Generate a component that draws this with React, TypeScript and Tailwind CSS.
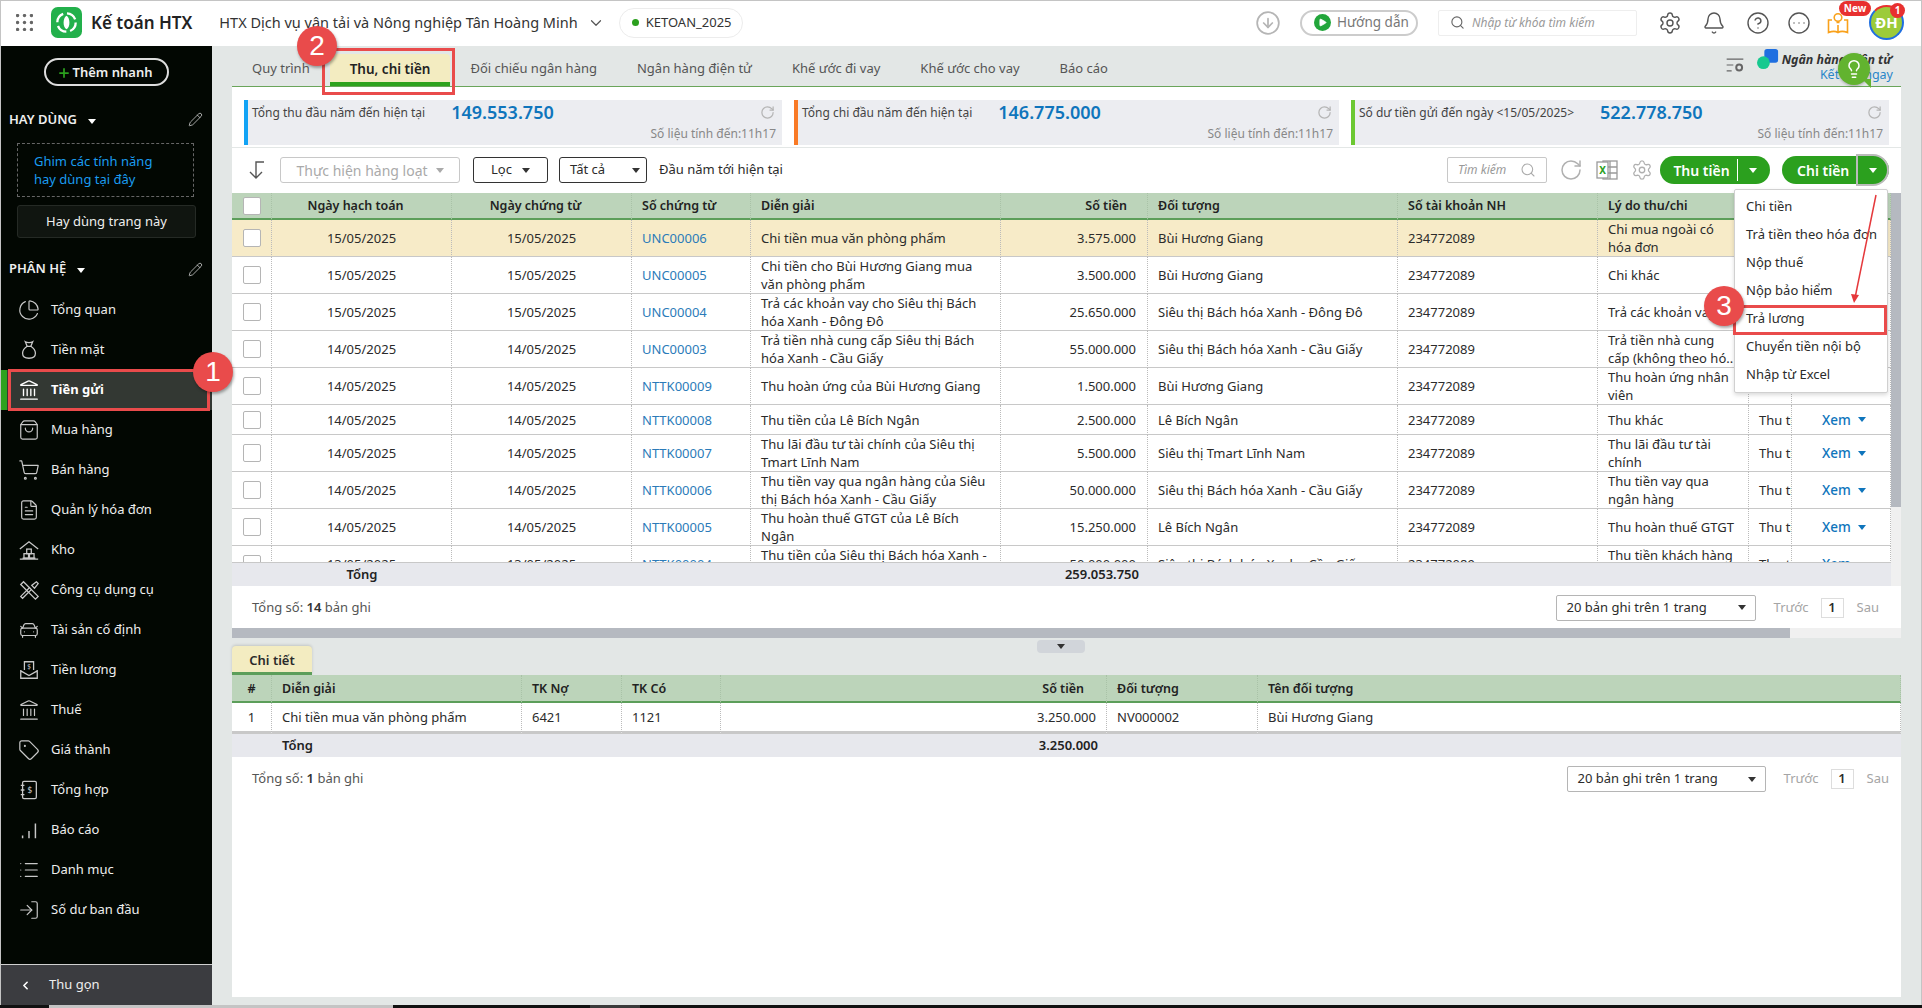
import { Bell, CarFront, ChartPie, ChevronDown, ChevronLeft, CircleArrowDown, CircleEllipsis, CircleHelp, FileText, Landmark, Lightbulb, List, LogIn, Pencil, Play, Plus, RotateCw, Search, Settings, ShoppingBag, ShoppingCart, Tag } from 'lucide-react';
import type { ReactNode } from 'react';

const Caret = ({ className = 'border-t-[#333]' }: { className?: string }) => (
  <span className={`inline-block h-0 w-0 border-x-[4px] border-t-[5px] border-x-transparent ${className}`} />
);

function MoneyBag() {
  return (
    <svg viewBox="0 0 24 24" className="h-[22px] w-[22px]" fill="none" stroke="#c8c8c8" strokeWidth="1.4">
      <path d="M8 3c2 1.2 6 1.2 8 0l-2 5h-4z" />
      <path d="M10 8c-3 2-5 4.500-5 7.500 0 3.500 3 5.500 7 5.500s7-2 7-5.500c0-3-2-5.500-5-7.500" />
    </svg>
  );
}

function Warehouse() {
  return (
    <svg viewBox="0 0 24 24" className="h-[22px] w-[22px]" fill="none" stroke="#c8c8c8" strokeWidth="1.4">
      <path d="M2 11l10-8 10 8M5 21h14M2 22h20" />
      <rect x="9.500" y="11" width="5" height="5" />
      <rect x="6.500" y="16" width="5" height="5" />
      <rect x="12.500" y="16" width="5" height="5" />
    </svg>
  );
}

function Tools() {
  return (
    <svg viewBox="0 0 24 24" className="h-[22px] w-[22px]" fill="none" stroke="#c8c8c8" strokeWidth="1.4">
      <path d="M3 6l3-3 16 16-3 3z" />
      <path d="M20 3l2 2-4 5-3-3zM13 9L3 19l2 2 10-10" />
    </svg>
  );
}

function Salary() {
  return (
    <svg viewBox="0 0 24 24" className="h-[22px] w-[22px]" fill="none" stroke="#c8c8c8" strokeWidth="1.4">
      <path d="M7 12V3h10v9M3 12v9h18v-9M3 13l9 5 9-5" />
      <text x="12" y="11" fontSize="7" textAnchor="middle" fill="#c8c8c8" stroke="none">$</text>
    </svg>
  );
}

function Ledger() {
  return (
    <svg viewBox="0 0 24 24" className="h-[22px] w-[22px]" fill="none" stroke="#c8c8c8" strokeWidth="1.4">
      <rect x="5" y="2.500" width="15" height="19" rx="1.500" />
      <path d="M3 7h4M3 12h4M3 17h4" />
      <text x="13" y="15" fontSize="9" textAnchor="middle" fill="#c8c8c8" stroke="none">$</text>
    </svg>
  );
}

function Bars() {
  return (
    <svg viewBox="0 0 24 24" className="h-[22px] w-[22px]" fill="none" stroke="#c8c8c8" strokeWidth="1.6">
      <path d="M5 21v-3M12 21v-8M19 21V5" />
    </svg>
  );
}

const iconCls = 'h-[22px] w-[22px] text-[#c8c8c8]';

const menu: { label: string; icon: ReactNode; active?: boolean }[] = [
  { label: 'Tổng quan', icon: <ChartPie className={iconCls} strokeWidth={1.3} /> },
  { label: 'Tiền mặt', icon: <MoneyBag /> },
  { label: 'Tiền gửi', icon: <Landmark className="h-[22px] w-[22px] text-white" strokeWidth={1.5} />, active: true },
  { label: 'Mua hàng', icon: <ShoppingBag className={iconCls} strokeWidth={1.3} /> },
  { label: 'Bán hàng', icon: <ShoppingCart className={iconCls} strokeWidth={1.3} /> },
  { label: 'Quản lý hóa đơn', icon: <FileText className={iconCls} strokeWidth={1.3} /> },
  { label: 'Kho', icon: <Warehouse /> },
  { label: 'Công cụ dụng cụ', icon: <Tools /> },
  { label: 'Tài sản cố định', icon: <CarFront className={iconCls} strokeWidth={1.3} /> },
  { label: 'Tiền lương', icon: <Salary /> },
  { label: 'Thuế', icon: <Landmark className={iconCls} strokeWidth={1.3} /> },
  { label: 'Giá thành', icon: <Tag className={iconCls} strokeWidth={1.3} /> },
  { label: 'Tổng hợp', icon: <Ledger /> },
  { label: 'Báo cáo', icon: <Bars /> },
  { label: 'Danh mục', icon: <List className={iconCls} strokeWidth={1.3} /> },
  { label: 'Số dư ban đầu', icon: <LogIn className={iconCls} strokeWidth={1.3} /> },
];

const tabs = ['Quy trình', 'Thu, chi tiền', 'Đối chiếu ngân hàng', 'Ngân hàng điện tử', 'Khế ước đi vay', 'Khế ước cho vay', 'Báo cáo'];

const rows = [
  { h: 'h-[37px]', d1: '15/05/2025', no: 'UNC00006', desc: 'Chi tiền mua văn phòng phẩm', amt: '3.575.000', obj: 'Bùi Hương Giang', why: 'Chi mua ngoài có hóa đơn', sel: true },
  { h: 'h-[37px]', d1: '15/05/2025', no: 'UNC00005', desc: 'Chi tiền cho Bùi Hương Giang mua văn phòng phẩm', amt: '3.500.000', obj: 'Bùi Hương Giang', why: 'Chi khác' },
  { h: 'h-[37px]', d1: '15/05/2025', no: 'UNC00004', desc: 'Trả các khoản vay cho Siêu thị Bách hóa Xanh - Đông Đô', amt: '25.650.000', obj: 'Siêu thị Bách hóa Xanh - Đông Đô', why: 'Trả các khoản vay' },
  { h: 'h-[37px]', d1: '14/05/2025', no: 'UNC00003', desc: 'Trả tiền nhà cung cấp Siêu thị Bách hóa Xanh - Cầu Giấy', amt: '55.000.000', obj: 'Siêu thị Bách hóa Xanh - Cầu Giấy', why: 'Trả tiền nhà cung cấp (không theo hó..' },
  { h: 'h-[37px]', d1: '14/05/2025', no: 'NTTK00009', desc: 'Thu hoàn ứng của Bùi Hương Giang', amt: '1.500.000', obj: 'Bùi Hương Giang', why: 'Thu hoàn ứng nhân viên' },
  { h: 'h-[30px]', d1: '14/05/2025', no: 'NTTK00008', desc: 'Thu tiền của Lê Bích Ngân', amt: '2.500.000', obj: 'Lê Bích Ngân', why: 'Thu khác' },
  { h: 'h-[37px]', d1: '14/05/2025', no: 'NTTK00007', desc: 'Thu lãi đầu tư tài chính của Siêu thị Tmart Lĩnh Nam', amt: '5.500.000', obj: 'Siêu thị Tmart Lĩnh Nam', why: 'Thu lãi đầu tư tài chính' },
  { h: 'h-[37px]', d1: '14/05/2025', no: 'NTTK00006', desc: 'Thu tiền vay qua ngân hàng của Siêu thị Bách hóa Xanh - Cầu Giấy', amt: '50.000.000', obj: 'Siêu thị Bách hóa Xanh - Cầu Giấy', why: 'Thu tiền vay qua ngân hàng' },
  { h: 'h-[37px]', d1: '14/05/2025', no: 'NTTK00005', desc: 'Thu hoàn thuế GTGT của Lê Bích Ngân', amt: '15.250.000', obj: 'Lê Bích Ngân', why: 'Thu hoàn thuế GTGT' },
  { h: 'h-[37px]', d1: '13/05/2025', no: 'NTTK00004', desc: 'Thu tiền của Siêu thị Bách hóa Xanh - Cầu Giấy', amt: '50.000.000', obj: 'Siêu thị Bách hóa Xanh - Cầu Giấy', why: 'Thu tiền khách hàng chưa' },
];

const cards = [
  { w: 'w-[538px]', bar: 'border-[#12a3f5]', label: 'Tổng thu đầu năm đến hiện tại', value: '149.553.750' },
  { w: 'w-[545px]', bar: 'border-[#f97a26]', label: 'Tổng chi đầu năm đến hiện tại', value: '146.775.000' },
  { w: 'w-[538px]', bar: 'border-[#6cc832]', label: 'Số dư tiền gửi đến ngày <15/05/2025>', value: '522.778.750' },
];

const payMenu = ['Chi tiền', 'Trả tiền theo hóa đơn', 'Nộp thuế', 'Nộp bảo hiểm', 'Trả lương', 'Chuyển tiền nội bộ', 'Nhập từ Excel'];

const th = 'border-r border-b-2 border-r-[#a9c2a7] border-b-[#5c9e5a] [border-right-style:dotted] px-[10px] pt-[1px] font-semibold text-[12.5px]';
const td = 'border-r border-b border-r-[#bbbbbb] border-b-[#c8c8c8] [border-right-style:dotted] px-[10px] leading-[18px] overflow-hidden';

function Checkbox() {
  return <span className="mx-auto block h-[18px] w-[18px] rounded-[2px] border border-[#b5b5b5] bg-white" />;
}

function Badge({ n, className }: { n: string; className: string }) {
  return (
    <div className={`absolute flex h-[40px] w-[40px] items-center justify-center rounded-full bg-[#e94b4b] font-['Liberation_Sans',sans-serif] text-[28px] text-white shadow-[1px_2px_3px_rgba(0,0,0,0.35)] ${className}`}>
      {n}
    </div>
  );
}

function Pager({ select }: { select: string }) {
  return (
    <div className="ml-auto flex items-center">
      <div className={`flex h-[26px] items-center justify-between rounded-[2px] border border-[#b5b5b5] pr-[9px] pl-[10px] text-[13px] ${select}`}>
        20 bản ghi trên 1 trang <Caret />
      </div>
      <span className="ml-[18px] text-[13px] text-[#a5a5a5]">Trước</span>
      <span className="ml-[12px] flex h-[20px] w-[23px] items-center justify-center border border-[#dddddd] text-[13px] font-semibold">1</span>
      <span className="ml-[13px] text-[13px] text-[#a5a5a5]">Sau</span>
    </div>
  );
}

export default function App() {
  return (
    <div className="relative flex h-[1008px] w-[1922px] flex-col overflow-hidden bg-[#e3e7e6] font-['Noto_Sans',sans-serif] text-[13px] text-[#2b2b2b]">
      <header className="flex h-[46px] shrink-0 items-center border-t border-r border-l border-[#c4c4c4] bg-white pb-[2px]">
        <svg viewBox="0 0 16 16" className="ml-[15px] h-[17px] w-[17px]" fill="#666">
          {[1.5, 8, 14.5].flatMap((x) => [1.5, 8, 14.5].map((y) => <circle key={`${x}-${y}`} cx={x} cy={y} r="1.6" />))}
        </svg>
        <svg viewBox="0 0 32 32" className="ml-[18px] h-[31px] w-[31px]">
          <rect width="32" height="32" rx="7" fill="#22b04b" />
          <circle cx="16" cy="16" r="9.500" fill="none" stroke="#fff" strokeWidth="2.400" strokeDasharray="11 4" />
          <path d="M16 9c4 2 4 12 0 14-4-2-4-12 0-14z" fill="#fff" />
        </svg>
        <span className="ml-[9px] text-[17px] font-semibold text-[#222]">Kế toán HTX</span>
        <span className="ml-[27px] text-[14.500px] text-[#333]">HTX Dịch vụ vận tải và Nông nghiệp Tân Hoàng Minh</span>
        <ChevronDown className="ml-[9px] h-[18px] w-[18px] text-[#555]" strokeWidth={1.6} />
        <div className="ml-[14px] flex h-[30px] w-[124px] items-center rounded-full border border-[#ececec] pl-[12px]">
          <span className="h-[7px] w-[7px] rounded-full bg-[#2ba01e]" />
          <span className="ml-[7px] text-[13px] text-[#333]">KETOAN_2025</span>
        </div>
        <CircleArrowDown className="ml-auto h-[26px] w-[26px] text-[#b5b5b5]" strokeWidth={1.6} />
        <div className="ml-[19px] flex h-[26px] w-[118px] items-center rounded-full border-2 border-[#cccccc] pl-[12px]">
          <span className="flex h-[17px] w-[17px] items-center justify-center rounded-full bg-[#22a63b]">
            <Play className="h-[9px] w-[9px] fill-white text-white" />
          </span>
          <span className="ml-[6px] text-[13.500px] text-[#777]">Hướng dẫn</span>
        </div>
        <div className="ml-[20px] flex h-[26px] w-[199px] items-center rounded-[2px] border border-[#eeeeee] pl-[11px]">
          <Search className="h-[15px] w-[15px] text-[#666]" strokeWidth={1.8} />
          <span className="ml-[7px] text-[12px] text-[#999] italic">Nhập từ khóa tìm kiếm</span>
        </div>
        <Settings className="ml-[21px] h-[24px] w-[24px] text-[#555]" strokeWidth={1.4} />
        <Bell className="ml-[20px] h-[24px] w-[24px] text-[#555]" strokeWidth={1.4} />
        <CircleHelp className="ml-[20px] h-[24px] w-[24px] text-[#555]" strokeWidth={1.4} />
        <CircleEllipsis className="ml-[17px] h-[24px] w-[24px] text-[#555]" strokeWidth={1.4} />
        <div className="relative ml-[15px] h-[24px] w-[24px]">
          <svg viewBox="0 0 24 24" className="h-[24px] w-[24px]" fill="none" stroke="#f9a11b" strokeWidth="1.600">
            <circle cx="12" cy="6.500" r="3.800" />
            <path d="M10.500 11.500h3M6 9H2.500v12.500c4-1.500 7-1.500 9.500 0 2.500-1.500 5.500-1.500 9.500 0V9H18M12 21.500V14" />
          </svg>
          <span className="absolute -top-[10px] -right-[21px] flex h-[15px] w-[32px] items-center justify-center rounded-full bg-[#e8302f] text-[10px] font-bold text-white">New</span>
        </div>
        <div className="relative mr-[17px] ml-[19px] flex h-[35px] w-[35px] items-center justify-center rounded-full border-[2px] border-[#1f6fe0] border-t-[#e8302f] bg-[#9ccb3a] text-[15px] font-bold text-white">
          ĐH
          <span className="absolute -top-[4px] -right-[3px] flex h-[15px] w-[15px] items-center justify-center rounded-full bg-[#e8302f] text-[10px] font-bold">1</span>
        </div>
      </header>

      <div className="flex min-h-0 flex-1">
        <aside className="flex w-[212px] shrink-0 flex-col border-l border-[#c4c4c4] bg-[#020702] text-[#eeeeee]">
          <div className="mt-[12px] ml-[43px] flex h-[28px] w-[125px] items-center justify-center rounded-full border-2 border-[#dddddd] pt-[1px] pr-[4px] font-semibold">
            <Plus className="mr-[2px] h-[14px] w-[14px] text-[#2ba01e]" strokeWidth={3} /> Thêm nhanh
          </div>
          <div className="mt-[23px] flex h-[20px] items-center pt-[1px] pr-[9px] pl-[8px] font-semibold">
            HAY DÙNG <span className="ml-[11px]"><Caret className="border-t-white" /></span>
            <Pencil className="ml-auto h-[15px] w-[15px] text-[#cccccc]" strokeWidth={1.3} />
          </div>
          <div className="mt-[14px] ml-[16px] h-[54px] w-[177px] border border-dashed border-[#666] py-[8px] pl-[16px] leading-[18px] text-[#1a9cf0]">
            Ghim các tính năng<br />hay dùng tại đây
          </div>
          <div className="mt-[8px] ml-[16px] flex h-[33px] w-[179px] items-center justify-center rounded-[3px] border border-[#252a25] bg-[#101510] pt-[1px]">
            Hay dùng trang này
          </div>
          <div className="mt-[21px] flex h-[20px] items-center pr-[9px] pl-[8px] font-semibold">
            PHÂN HỆ <span className="ml-[11px]"><Caret className="border-t-white" /></span>
            <Pencil className="ml-auto h-[15px] w-[15px] text-[#cccccc]" strokeWidth={1.3} />
          </div>
          <nav className="mt-[11px]">
            {menu.map((m) => (
              <div key={m.label} className={m.active ? 'flex h-[40px] items-center gap-[11px] border-l-[6px] border-[#2ea21e] bg-[#333833] pl-[11px] font-bold text-white' : 'flex h-[40px] items-center gap-[11px] pl-[17px]'}>
                {m.icon}
                <span>{m.label}</span>
              </div>
            ))}
          </nav>
          <div className="mt-auto flex h-[41px] items-center border-t border-[#d0d0d0] bg-[#3b3c40] pl-[18px]">
            <ChevronLeft className="h-[13px] w-[13px] text-white" strokeWidth={3} />
            <span className="ml-[17px]">Thu gọn</span>
          </div>
        </aside>

        <main className="flex min-w-0 flex-1 flex-col border-r border-[#c4c4c4] pr-[20px] pl-[20px]">
          <div className="flex h-[41px] shrink-0 items-end border-b border-[#6aa55a]">
            {tabs.map((t, i) => (
              <div key={t} className={i === 1 ? 'flex h-[32px] items-center rounded-t-[4px] border-b-[4px] border-[#2ea21e] bg-[#f3ecc1] px-[20px] pt-[2px] text-[13.500px] font-semibold text-[#222]' : 'flex h-[32px] items-center border-b-[4px] border-transparent px-[20px] pt-[2px] text-[#555]'}>
                {t}
              </div>
            ))}
            <div className="mb-[1px] ml-auto flex items-center pr-[8px]">
              <svg viewBox="0 0 24 24" className="mb-[3px] h-[20px] w-[20px]" fill="none" stroke="#666" strokeWidth="1.400">
                <path d="M2 5h20M2 12h8M2 19h6" />
                <circle cx="17" cy="15" r="3.500" strokeWidth="2.400" />
              </svg>
              <svg viewBox="0 0 24 24" className="mb-[15px] ml-[12px] h-[22px] w-[22px]">
                <rect x="8" y="1" width="15" height="15" rx="3" fill="#1f6fe0" />
                <circle cx="7" cy="16" r="7" fill="#17c98f" />
              </svg>
              <div className="ml-[3px] flex flex-col items-end leading-[15px]">
                <span className="mr-[1px] text-[12.400px] font-bold text-[#333] italic">Ngân hàng điện tử</span>
                <span className="text-[12.500px] text-[#2a86c9]">Kết nối ngay</span>
              </div>
            </div>
          </div>

          <section className="flex shrink-0 flex-col bg-white">
            <div className="mt-[13px] flex h-[45px] gap-[12px] px-[12px]">
              {cards.map((c) => (
                <div key={c.label} className={`${c.w} border-l-4 bg-[#ecedf1] pr-[6px] pl-[4px] ${c.bar}`}>
                  <div className="flex h-[25px] items-center">
                    <span className="text-[12px] text-[#444]">{c.label}</span>
                    <span className="ml-[26px] text-[18px] font-semibold text-[#0f75bc]">{c.value}</span>
                    <RotateCw className="mr-[1px] ml-auto h-[15px] w-[15px] text-[#b5b5b5]" strokeWidth={2} />
                  </div>
                  <div className="text-right text-[12px] leading-[18px] text-[#888]">Số liệu tính đến:11h17</div>
                </div>
              ))}
            </div>
            <div className="mt-[2px] h-[1px] bg-[#e3e7e6]" />
            <div className="flex h-[45px] items-center pr-[12px] pb-[1px] pl-[15px]">
              <svg viewBox="0 0 18 20" className="h-[20px] w-[18px]" fill="none" stroke="#555" strokeWidth="1.400">
                <path d="M17 2h-8v16M3 12l6 6 6-6" />
              </svg>
              <div className="ml-[15px] flex h-[26px] w-[180px] items-center justify-center gap-[8px] rounded-[3px] border border-[#c8c8c8] text-[14px] text-[#aaaaaa]">
                Thực hiện hàng loạt <Caret className="border-t-[#aaaaaa]" />
              </div>
              <div className="ml-[13px] flex h-[26px] w-[75px] items-center justify-center gap-[10px] rounded-[3px] border border-[#333]">
                Lọc <Caret />
              </div>
              <div className="ml-[11px] flex h-[26px] w-[88px] items-center justify-between rounded-[3px] border border-[#333] pr-[6px] pl-[10px]">
                Tất cả <Caret />
              </div>
              <span className="ml-[12px]">Đầu năm tới hiện tại</span>
              <div className="ml-auto flex h-[26px] w-[100px] items-center justify-between rounded-[2px] border border-[#c8c8c8] pr-[10px] pl-[10px] text-[12px] text-[#999] italic">
                Tìm kiếm <Search className="h-[16px] w-[16px] text-[#aaaaaa]" strokeWidth={1.6} />
              </div>
              <RotateCw className="ml-[12px] h-[24px] w-[24px] text-[#b0b0b0]" strokeWidth={1.5} />
              <svg viewBox="0 0 24 24" className="ml-[12px] h-[24px] w-[24px]" fill="none" stroke="#9a9a9a" strokeWidth="1.300">
                <rect x="8" y="3" width="14" height="18" />
                <path d="M15 3v18M8 9h14M8 15h14" />
                <rect x="2" y="4" width="11" height="16" fill="#fff" />
                <text x="7.500" y="16" fontSize="10" fontWeight="700" textAnchor="middle" fill="#2ba01e" stroke="none">X</text>
              </svg>
              <Settings className="ml-[12px] h-[22px] w-[22px] text-[#b0b0b0]" strokeWidth={1.4} />
              <div className="ml-[7px] flex h-[28px] w-[110px] items-center rounded-full bg-[#2ba01e] text-[14px] font-semibold text-white">
                <span className="flex h-[22px] w-[78px] items-center justify-center border-r border-white pl-[6px]">Thu tiền</span>
                <span className="ml-[11px] flex items-center"><Caret className="border-t-white" /></span>
              </div>
              <div className="ml-[12px] flex h-[28px] w-[107px] items-center rounded-full bg-[#2ba01e] text-[14px] font-semibold text-white">
                <span className="w-[75px] pl-[8px] text-center">Chi tiền</span>
                <span className="flex h-[32px] w-[33px] items-center justify-center rounded-r-full border-2 border-[#bbbbbb] bg-[#2ba01e]">
                  <Caret className="border-t-white" />
                </span>
              </div>
            </div>

            <div className="flex h-[369px]">
              <div className="w-[1659px] overflow-hidden">
                <table className="w-[1659px] table-fixed border-separate border-spacing-0">
                  <colgroup>
                    <col className="w-[40px]" /><col className="w-[180px]" /><col className="w-[180px]" /><col className="w-[119px]" />
                    <col className="w-[250px]" /><col className="w-[147px]" /><col className="w-[250px]" /><col className="w-[200px]" />
                    <col className="w-[151px]" /><col className="w-[43px]" /><col className="w-[99px]" />
                  </colgroup>
                  <thead>
                    <tr className="h-[27px] bg-[#bcd4ba] text-left text-[#222]">
                      <th className={th}><Checkbox /></th>
                      <th className={`${th} pr-[22px] text-center`}>Ngày hạch toán</th>
                      <th className={`${th} pr-[22px] text-center`}>Ngày chứng từ</th>
                      <th className={th}>Số chứng từ</th>
                      <th className={th}>Diễn giải</th>
                      <th className={`${th} pr-[20px] text-right`}>Số tiền</th>
                      <th className={th}>Đối tượng</th>
                      <th className={th}>Số tài khoản NH</th>
                      <th className={th}>Lý do thu/chi</th>
                      <th className={th} />
                      <th className={th} />
                    </tr>
                  </thead>
                  <tbody>
                    {rows.map((r) => (
                      <tr key={r.no} className={`${r.h} ${r.sel ? 'bg-[#f7ebc8]' : 'bg-white'}`}>
                        <td className={td}><Checkbox /></td>
                        <td className={`${td} text-center`}>{r.d1}</td>
                        <td className={`${td} text-center`}>{r.d1}</td>
                        <td className={`${td} text-[#2b7bb9]`}>{r.no}</td>
                        <td className={td}>{r.desc}</td>
                        <td className={`${td} pr-[11px] text-right`}>{r.amt}</td>
                        <td className={`${td} whitespace-nowrap`}>{r.obj}</td>
                        <td className={td}>234772089</td>
                        <td className={td}>{r.why}</td>
                        <td className={`${td} whitespace-nowrap`}>Thu tiền</td>
                        <td className={`${td} pl-[30px] text-[13.500px] font-medium whitespace-nowrap text-[#0f75bc]`}>
                          <span className="flex items-center gap-[7px]">Xem <Caret className="border-t-[#0f75bc]" /></span>
                        </td>
                      </tr>
                    ))}
                  </tbody>
                </table>
              </div>
              <div className="w-[10px] bg-[#f0f0f0]">
                <div className="h-[314px] bg-[#b5b9c0]" />
              </div>
            </div>
            <div className="flex">
              <div className="flex h-[24px] w-[1659px] items-center border-t border-[#c8c8c8] bg-[#e7e8ed] font-semibold text-[#222]">
                <span className="w-[220px] pl-[40px] text-center">Tổng</span>
                <span className="w-[687px] text-right">259.053.750</span>
              </div>
              <div className="w-[10px] bg-[#f0f0f0]" />
            </div>
            <div className="flex h-[42px] items-center pt-[1px] pr-[22px] pl-[20px]">
              <span className="text-[#555]">Tổng số: <b className="font-semibold text-[#333]">14</b> bản ghi</span>
              <Pager select="w-[200px]" />
            </div>
            <div className="h-[10px] bg-[#f0f0f0]">
              <div className="h-[10px] w-[1558px] bg-[#b5b9c0]" />
            </div>
          </section>

          <div className="flex h-[37px] shrink-0">
            <div className="flex h-[29px] w-[80px] items-center justify-center self-end rounded-t-[4px] border-b-[3px] border-[#5c9e5a] bg-[#f3ecc1] pt-[3px] font-semibold shadow-[0_-1px_3px_rgba(0,0,0,0.15)]">
              Chi tiết
            </div>
            <div className="mt-[2px] ml-[725px] flex h-[13px] w-[48px] items-center justify-center rounded-[4px] bg-[#d1d5da]">
              <Caret />
            </div>
          </div>

          <section className="mb-[8px] flex min-h-0 flex-1 flex-col bg-white">
            <table className="w-full table-fixed border-separate border-spacing-0">
              <colgroup>
                <col className="w-[40px]" /><col className="w-[250px]" /><col className="w-[100px]" /><col className="w-[99px]" />
                <col className="w-[386px]" /><col className="w-[151px]" /><col />
              </colgroup>
              <thead>
                <tr className="h-[28px] bg-[#bcd4ba] text-left text-[#222]">
                  <th className={`${th} pt-[2px] text-center`}>#</th>
                  <th className={`${th} pt-[2px]`}>Diễn giải</th>
                  <th className={`${th} pt-[2px]`}>TK Nợ</th>
                  <th className={`${th} pt-[2px]`}>TK Có</th>
                  <th className={`${th} pt-[2px] pr-[22px] text-right`}>Số tiền</th>
                  <th className={`${th} pt-[2px]`}>Đối tượng</th>
                  <th className={`${th} pt-[2px]`}>Tên đối tượng</th>
                </tr>
              </thead>
              <tbody>
                <tr className="h-[31px]">
                  <td className={`${td} border-b-[3px] text-center`}>1</td>
                  <td className={`${td} border-b-[3px]`}>Chi tiền mua văn phòng phẩm</td>
                  <td className={`${td} border-b-[3px]`}>6421</td>
                  <td className={`${td} border-b-[3px]`}>1121</td>
                  <td className={`${td} border-b-[3px] text-right`}>3.250.000</td>
                  <td className={`${td} border-b-[3px]`}>NV000002</td>
                  <td className={`${td} border-b-[3px]`}>Bùi Hương Giang</td>
                </tr>
              </tbody>
            </table>
            <div className="flex h-[23px] items-center bg-[#e7e8ed] font-semibold text-[#222]">
              <span className="w-[290px] pl-[50px]">Tổng</span>
              <span className="w-[576px] text-right">3.250.000</span>
            </div>
            <div className="flex items-center pt-[9px] pr-[12px] pl-[20px]">
              <span className="text-[#555]">Tổng số: <b className="font-semibold text-[#333]">1</b> bản ghi</span>
              <Pager select="w-[199px]" />
            </div>
          </section>
        </main>
      </div>

      <div className="flex h-[3px] shrink-0 bg-[#111111]">
        <div className="w-[49px]" />
        <div className="w-[344px] bg-[#c4c4c4]" />
        <div className="ml-[197px] w-[50px] bg-[#3a3a3a]" />
      </div>

      <div className="absolute top-[189px] left-[1734px] w-[154px] rounded-[2px] border border-[#d0d0d0] bg-white py-[3px] shadow-[0_2px_4px_rgba(0,0,0,0.15)]">
        {payMenu.map((p) => (
          <div key={p} className="flex h-[28px] items-center pl-[11px] whitespace-nowrap">{p}</div>
        ))}
      </div>
      <svg viewBox="0 0 30 110" className="absolute top-[194px] left-[1850px] h-[110px] w-[30px]" fill="none">
        <path d="M26 1L5 104" stroke="#e5383b" strokeWidth="1.500" />
        <path d="M1 100l3 9 5-8z" fill="#e5383b" />
      </svg>
      <div className="absolute top-[305px] left-[1733px] h-[30px] w-[154px] border-[3px] border-[#e94b4b]" />
      <div className="absolute top-[48px] left-[322px] h-[47px] w-[133px] border-[3px] border-[#e94b4b]" />
      <div className="absolute top-[369px] left-[8px] h-[42px] w-[202px] border-[3px] border-[#e94b4b]" />
      <Badge n="1" className="top-[352px] left-[193px]" />
      <Badge n="2" className="top-[26px] left-[297px]" />
      <Badge n="3" className="top-[286px] left-[1704px]" />

      <div className="absolute top-[53px] left-[1838px] flex h-[32px] w-[32px] items-center justify-center rounded-full bg-[#62b32f] shadow-[0_1px_3px_rgba(0,0,0,0.3)]">
        <Lightbulb className="h-[20px] w-[20px] text-white" strokeWidth={1.8} />
        <span className="absolute -right-[1px] -bottom-[3px] h-0 w-0 border-t-[9px] border-l-[9px] border-t-[#62b32f] border-l-transparent" />
      </div>
    </div>
  );
}
